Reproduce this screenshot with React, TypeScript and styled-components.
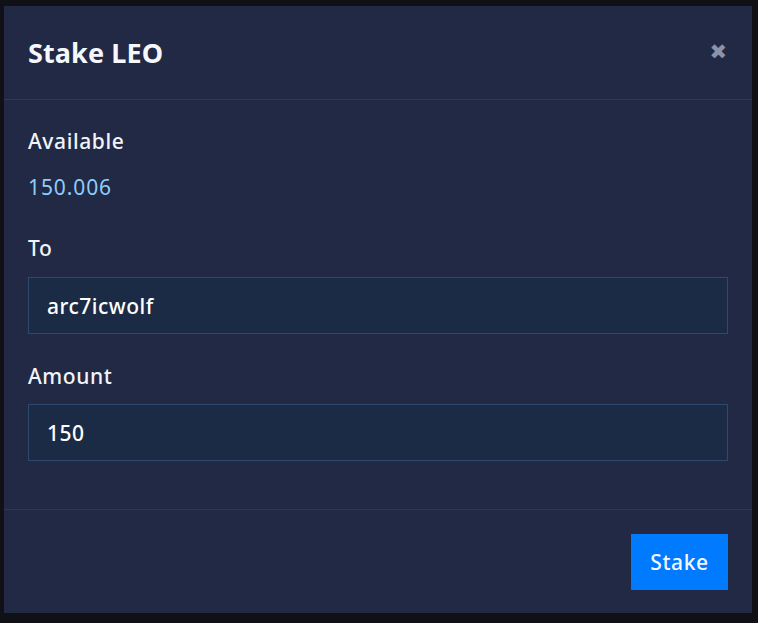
import * as React from "react";
import styled, { createGlobalStyle } from "styled-components";

const GlobalStyle = createGlobalStyle`
  html, body {
    margin: 0;
    padding: 0;
    background: #0f1117;
  }
  body {
    font-family: "Noto Sans", "Open Sans", sans-serif;
    -webkit-font-smoothing: antialiased;
  }
  * {
    box-sizing: border-box;
  }
`;

const Backdrop = styled.div`
  width: 758px;
  height: 623px;
  padding: 6px 0 0 4px;
  background: #0f1117;
`;

const Modal = styled.div`
  width: 748px;
  height: 607px;
  background: #212945;
  display: flex;
  flex-direction: column;
  color: #f4f6fb;
`;

const Header = styled.div`
  display: flex;
  align-items: center;
  justify-content: space-between;
  padding: 24px 24px 24px 24px;
  border-bottom: 1px solid #2f3854;
`;

const Title = styled.h2`
  margin: 0;
  font-size: 27px;
  line-height: 45px;
  font-weight: 700;
  letter-spacing: 0.1px;
  color: #f5f7fb;
`;

const Close = styled.button`
  border: 0;
  background: transparent;
  padding: 0;
  margin-right: 1px;
  color: #8a93a8;
  font-family: "DejaVu Sans", sans-serif;
  font-size: 21px;
  line-height: 1;
  cursor: pointer;
`;

const Body = styled.div`
  flex: 1;
  padding: 26px 24px 0 24px;
`;

const Group = styled.div<{ $gap: number }>`
  margin-bottom: ${(p) => p.$gap}px;
`;

const Label = styled.div<{ $gap: number }>`
  font-size: 21px;
  line-height: 30px;
  font-weight: 500;
  letter-spacing: 0.6px;
  margin-bottom: ${(p) => p.$gap}px;
  color: #f2f4f8;
`;

const Value = styled.div`
  font-size: 21px;
  line-height: 30px;
  letter-spacing: 0.9px;
  color: #8fcdfa;
`;

const Input = styled.input`
  display: block;
  width: 100%;
  height: 57px;
  padding: 0 18px;
  background: #1c2b45;
  border: 1px solid #2c4a6e;
  outline: none;
  color: #ffffff;
  font-family: inherit;
  font-size: 21px;
  font-weight: 500;
  letter-spacing: 0.5px;
`;

const Footer = styled.div`
  display: flex;
  justify-content: flex-end;
  padding: 24px 24px 23px 24px;
  border-top: 1px solid #2f3854;
`;

const Button = styled.button`
  width: 97px;
  height: 56px;
  border: 0;
  background: #007bff;
  color: #f5f8ff;
  font-family: inherit;
  font-size: 21px;
  font-weight: 500;
  letter-spacing: 0.6px;
  cursor: pointer;
`;

export default function App() {
  const [to, setTo] = React.useState("arc7icwolf");
  const [amount, setAmount] = React.useState("150");

  return (
    <>
      <GlobalStyle />
      <Backdrop>
        <Modal>
          <Header>
            <Title>Stake LEO</Title>
            <Close aria-label="close">✖</Close>
          </Header>
          <Body>
            <Group $gap={31}>
              <Label $gap={16}>Available</Label>
              <Value>150.006</Value>
            </Group>
            <Group $gap={27}>
              <Label $gap={14}>To</Label>
              <Input value={to} onChange={(e) => setTo(e.target.value)} />
            </Group>
            <Group $gap={0}>
              <Label $gap={13}>Amount</Label>
              <Input
                value={amount}
                onChange={(e) => setAmount(e.target.value)}
              />
            </Group>
          </Body>
          <Footer>
            <Button>Stake</Button>
          </Footer>
        </Modal>
      </Backdrop>
    </>
  );
}
